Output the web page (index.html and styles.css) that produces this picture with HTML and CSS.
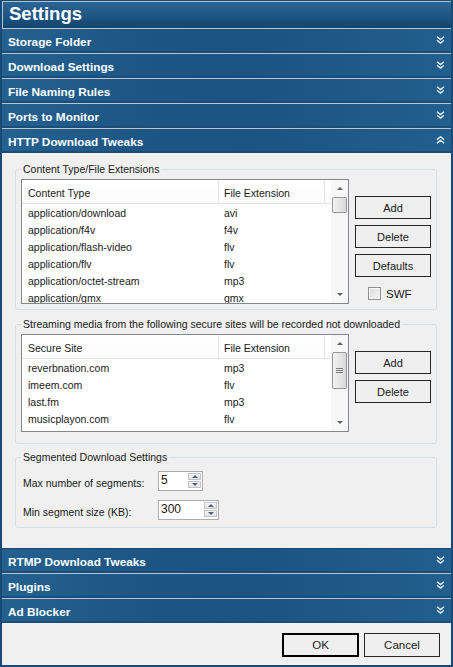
FILE: index.html
```html
<!DOCTYPE html>
<html lang="en">
<head>
    <meta charset="UTF-8" />
    <meta name="viewport" content="width=device-width, initial-scale=1.0" />
    <title>Settings</title>
    <link rel="stylesheet" href="styles.css">
</head>
<body>
    <div class="window">
        <div class="title">Settings</div>

        <div class="section">
            <span class="section-label">Storage Folder</span>
            <svg class="chev" width="9" height="8" viewBox="0 0 9 8"><path d="M1 0.8 L4.5 3.6 L8 0.8 M1 4.3 L4.5 7.1 L8 4.3" /></svg>
        </div>
        <div class="section">
            <span class="section-label">Download Settings</span>
            <svg class="chev" width="9" height="8" viewBox="0 0 9 8"><path d="M1 0.8 L4.5 3.6 L8 0.8 M1 4.3 L4.5 7.1 L8 4.3" /></svg>
        </div>
        <div class="section">
            <span class="section-label">File Naming Rules</span>
            <svg class="chev" width="9" height="8" viewBox="0 0 9 8"><path d="M1 0.8 L4.5 3.6 L8 0.8 M1 4.3 L4.5 7.1 L8 4.3" /></svg>
        </div>
        <div class="section">
            <span class="section-label">Ports to Monitor</span>
            <svg class="chev" width="9" height="8" viewBox="0 0 9 8"><path d="M1 0.8 L4.5 3.6 L8 0.8 M1 4.3 L4.5 7.1 L8 4.3" /></svg>
        </div>
        <div class="section">
            <span class="section-label">HTTP Download Tweaks</span>
            <svg class="chev" width="9" height="8" viewBox="0 0 9 8"><path d="M1 3.6 L4.5 0.8 L8 3.6 M1 7.1 L4.5 4.3 L8 7.1" /></svg>
        </div>

        <div class="panel">
            <fieldset class="group group-types">
                <legend>Content Type/File Extensions</legend>
                <div class="group-body">
                    <div class="list list-types">
                        <div class="list-main">
                            <div class="list-head">
                                <div class="col">Content Type</div>
                                <div class="col">File Extension</div>
                            </div>
                            <div class="list-row"><div>application/download</div><div>avi</div></div>
                            <div class="list-row"><div>application/f4v</div><div>f4v</div></div>
                            <div class="list-row"><div>application/flash-video</div><div>flv</div></div>
                            <div class="list-row"><div>application/flv</div><div>flv</div></div>
                            <div class="list-row"><div>application/octet-stream</div><div>mp3</div></div>
                            <div class="list-row"><div>application/gmx</div><div>gmx</div></div>
                        </div>
                        <div class="scrollbar">
                            <span class="arrow arrow-up"></span>
                            <span class="thumb thumb-types"></span>
                            <span class="arrow arrow-down"></span>
                        </div>
                    </div>
                    <div class="side">
                        <button class="btn">Add</button>
                        <button class="btn">Delete</button>
                        <button class="btn">Defaults</button>
                        <label class="check"><span class="check-box"></span>SWF</label>
                    </div>
                </div>
            </fieldset>

            <fieldset class="group group-sites">
                <legend>Streaming media from the following secure sites will be recorded not downloaded</legend>
                <div class="group-body">
                    <div class="list list-sites">
                        <div class="list-main">
                            <div class="list-head">
                                <div class="col">Secure Site</div>
                                <div class="col">File Extension</div>
                            </div>
                            <div class="list-row"><div>reverbnation.com</div><div>mp3</div></div>
                            <div class="list-row"><div>imeem.com</div><div>flv</div></div>
                            <div class="list-row"><div>last.fm</div><div>mp3</div></div>
                            <div class="list-row"><div>musicplayon.com</div><div>flv</div></div>
                        </div>
                        <div class="scrollbar">
                            <span class="arrow arrow-up"></span>
                            <span class="thumb thumb-sites"><i></i><i></i><i></i></span>
                            <span class="arrow arrow-down"></span>
                        </div>
                    </div>
                    <div class="side">
                        <button class="btn">Add</button>
                        <button class="btn">Delete</button>
                    </div>
                </div>
            </fieldset>

            <fieldset class="group group-segments">
                <legend>Segmented Download Settings</legend>
                <div class="seg-grid">
                    <span class="seg-label">Max number of segments:</span>
                    <div class="spin spin-sm">
                        <span class="spin-value">5</span>
                        <div class="spin-btns"><span class="spin-up"></span><span class="spin-down"></span></div>
                    </div>
                    <span class="seg-label">Min segment size (KB):</span>
                    <div class="spin spin-md">
                        <span class="spin-value">300</span>
                        <div class="spin-btns"><span class="spin-up"></span><span class="spin-down"></span></div>
                    </div>
                </div>
            </fieldset>
        </div>

        <div class="section section-first">
            <span class="section-label">RTMP Download Tweaks</span>
            <svg class="chev" width="9" height="8" viewBox="0 0 9 8"><path d="M1 0.8 L4.5 3.6 L8 0.8 M1 4.3 L4.5 7.1 L8 4.3" /></svg>
        </div>
        <div class="section">
            <span class="section-label">Plugins</span>
            <svg class="chev" width="9" height="8" viewBox="0 0 9 8"><path d="M1 0.8 L4.5 3.6 L8 0.8 M1 4.3 L4.5 7.1 L8 4.3" /></svg>
        </div>
        <div class="section">
            <span class="section-label">Ad Blocker</span>
            <svg class="chev" width="9" height="8" viewBox="0 0 9 8"><path d="M1 0.8 L4.5 3.6 L8 0.8 M1 4.3 L4.5 7.1 L8 4.3" /></svg>
        </div>

        <div class="footer">
            <button class="btn btn-default">OK</button>
            <button class="btn">Cancel</button>
        </div>
    </div>
</body>
</html>
```

FILE: styles.css
```css
* {
    box-sizing: border-box;
}
body {
    margin: 0;
    font-family: "Liberation Sans", Arial, sans-serif;
    font-size: 10.5px;
    color: #1a1a1a;
    background-color: #174a75;
}
.window {
    width: 453px;
    height: 667px;
    border: 2px solid #174a75;
    border-top-width: 1px;
    background-color: #f0f0f0;
    display: flex;
    flex-direction: column;
}
.title {
    height: 27px;
    border-top: 1px solid #b4c0cb;
    border-left: 1px solid #b4c0cb;
    padding-left: 6px;
    background: linear-gradient(to bottom, #2c6593, #1d5583 55%, #14446d);
    color: #fff;
    font-weight: bold;
    font-size: 18.5px;
    line-height: 23px;
}
.section {
    height: 25px;
    flex-shrink: 0;
    border-top: 1px solid #b9c4ce;
    padding: 0 6px 0 6px;
    display: flex;
    justify-content: space-between;
    align-items: flex-start;
    background: linear-gradient(to right, #24618f, #1c5483 35%, #1b5381 55%, #225f8e 100%);
    box-shadow: inset 0 -2px 0 #1a4d79;
    color: #fff;
    font-weight: bold;
    font-size: 11.8px;
}
.section-first {
    border-top-color: #174a75;
}
.section-label {
    line-height: 14px;
    padding-top: 6px;
}
.chev {
    margin-top: 7px;
    fill: none;
    stroke: #e8eef4;
    stroke-width: 1.4;
}
.panel {
    height: 395px;
    flex-shrink: 0;
    background-color: #f0f0f0;
    padding-top: 10px;
}
.group {
    margin: 0 14px 0 13px;
    padding: 3px 5px 5px 5px;
    border: 1px solid #d5dfe5;
    border-radius: 3px;
}
.group legend {
    padding: 0 2px;
    line-height: 13px;
    color: #1a1a1a;
}
.group-sites {
    margin-top: 8px;
    padding-bottom: 11px;
}
.group-segments {
    margin-top: 7px;
    padding-top: 7px;
    padding-bottom: 7px;
}
.group-body {
    display: flex;
    gap: 6px;
}
.list {
    width: 328px;
    border: 1px solid #828790;
    background-color: #fff;
    display: flex;
    overflow: hidden;
}
.list-types {
    height: 125px;
}
.list-sites {
    height: 98px;
}
.list-main {
    flex: 1;
    overflow: hidden;
}
.list-head {
    display: flex;
    height: 24px;
    border-bottom: 1px solid #e5e5e5;
    background: linear-gradient(to bottom, #ffffff, #fcfcfd);
}
.list-head .col {
    line-height: 27px;
    border-right: 1px solid #e5e5e5;
    padding-left: 6px;
}
.list-head .col:first-child {
    width: 197px;
}
.list-head .col:last-child {
    width: 106px;
    padding-left: 5px;
}
.list-row {
    display: flex;
    height: 17px;
    line-height: 19px;
}
.list-row div:first-child {
    width: 197px;
    padding-left: 6px;
}
.list-row div:last-child {
    padding-left: 5px;
}
.scrollbar {
    width: 17px;
    background-color: #f7f7f7;
    display: flex;
    flex-direction: column;
    align-items: center;
}
.arrow {
    width: 17px;
    height: 17px;
    display: flex;
    justify-content: center;
    align-items: center;
}
.arrow::before {
    content: "";
    border-left: 3px solid transparent;
    border-right: 3px solid transparent;
}
.arrow-up::before {
    border-bottom: 3px solid #606060;
}
.arrow-down::before {
    border-top: 3px solid #606060;
}
.arrow-down {
    margin-top: auto;
}
.thumb {
    width: 15px;
    border: 1px solid #979797;
    border-radius: 2px;
    background: linear-gradient(to right, #f3f3f3, #e6e6e6 50%, #d8d8d8);
}
.thumb-types {
    height: 16px;
}
.thumb-sites {
    height: 37px;
    display: flex;
    flex-direction: column;
    align-items: center;
    justify-content: center;
    gap: 1px;
}
.thumb-sites i {
    width: 7px;
    height: 1px;
    background-color: #7a7a7a;
}
.side {
    width: 76px;
    padding-top: 17px;
    display: flex;
    flex-direction: column;
    gap: 6px;
}
.btn {
    height: 23px;
    width: 76px;
    border: 1px solid #262626;
    background-color: #efefef;
    font-family: "Liberation Sans", Arial, sans-serif;
    font-size: 11px;
    color: #1a1a1a;
    padding: 0;
}
.btn-default {
    border: 2px solid #000;
    height: 24px;
    width: 77px;
}
.check {
    display: flex;
    align-items: center;
    gap: 5px;
    margin-top: 4px;
    margin-left: 13px;
    font-size: 11.5px;
}
.check-box {
    width: 13px;
    height: 13px;
    border: 1px solid #8f8f8f;
    background: linear-gradient(135deg, #dcdcdc, #f6f6f6);
    box-shadow: inset 0 0 0 1px #f4f4f4;
}
.seg-grid {
    display: grid;
    grid-template-columns: 137px auto;
    row-gap: 9px;
    align-items: center;
}
.seg-label {
    padding-left: 2px;
    padding-top: 3px;
}
.spin {
    height: 20px;
    border: 1px solid #abadb3;
    background-color: #fff;
    display: flex;
    justify-content: space-between;
    padding: 1px 1px 1px 2px;
}
.spin-sm {
    width: 45px;
}
.spin-md {
    width: 61px;
}
.spin-value {
    font-size: 12px;
    line-height: 14px;
    color: #1f1a14;
}
.spin-btns {
    display: flex;
    flex-direction: column;
    gap: 1px;
    width: 13px;
}
.spin-btns span {
    height: 7px;
    border: 1px solid #c3c3c3;
    background: linear-gradient(to bottom, #f6f6f6, #e4e4e4);
    display: flex;
    justify-content: center;
    align-items: center;
}
.spin-btns span::before {
    content: "";
    border-left: 3px solid transparent;
    border-right: 3px solid transparent;
}
.spin-up::before {
    border-bottom: 3px solid #4d6186;
}
.spin-down::before {
    border-top: 3px solid #4d6186;
}
.footer {
    flex: 1;
    display: flex;
    justify-content: flex-end;
    align-items: flex-start;
    gap: 5px;
    padding: 10px 11px 0 0;
    background-color: #f0f0f0;
}
.footer .btn {
    height: 24px;
    font-size: 11.5px;
}
```
